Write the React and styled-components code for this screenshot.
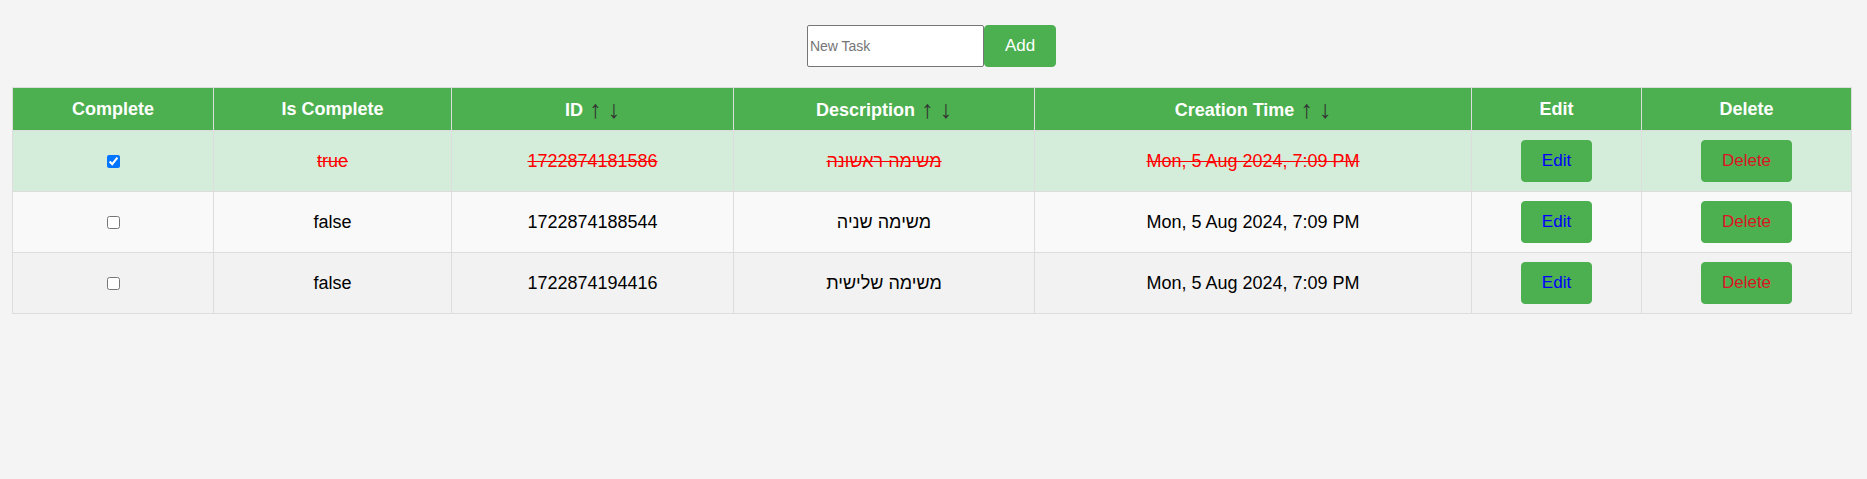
import styled, { createGlobalStyle } from "styled-components";

const tasks = [
    {id: 1722874181586, description: 'משימה ראשונה', time: 'Mon, 5 Aug 2024, 7:09 PM', complete: true},
    {id: 1722874188544, description: 'משימה שניה', time: 'Mon, 5 Aug 2024, 7:09 PM', complete: false},
    {id: 1722874194416, description: 'משימה שלישית', time: 'Mon, 5 Aug 2024, 7:09 PM', complete: false}
];

const columns = [
    {label: 'Complete', width: 201},
    {label: 'Is Complete', width: 238},
    {label: 'ID', width: 282, sort: true},
    {label: 'Description', width: 301, sort: true},
    {label: 'Creation Time', width: 437, sort: true},
    {label: 'Edit', width: 170},
    {label: 'Delete', width: 210}
];

const GlobalStyle = createGlobalStyle`
  body {
    margin: 0;
    background: #f4f4f4;
    font-family: "Liberation Sans", Arial, sans-serif;
  }
`;

const App = () => {
    return (
        <Page>
            <GlobalStyle/>
            <AddForm>
                <TaskInput placeholder="New Task"/>
                <GreenButton>Add</GreenButton>
            </AddForm>
            <StyledTable>
                <colgroup>
                    {columns.map(col => <col key={col.label} style={{width: col.width}}/>)}
                </colgroup>
                <thead>
                <tr>
                    {columns.map(col =>
                        <th key={col.label}>
                            {col.label}
                            {col.sort && <>
                                <SortButton>↑</SortButton>
                                <SortButton>↓</SortButton>
                            </>}
                        </th>)}
                </tr>
                </thead>
                <tbody>
                {tasks.map((task, index) => (
                    <Row key={task.id} $complete={task.complete} $even={index % 2 === 1}>
                        <td><input type="checkbox" defaultChecked={task.complete}/></td>
                        <td>{String(task.complete)}</td>
                        <td>{task.id}</td>
                        <td dir="rtl">{task.description}</td>
                        <td>{task.time}</td>
                        <td><GreenButton $color="#0000ff">Edit</GreenButton></td>
                        <td><GreenButton $color="#dc1426">Delete</GreenButton></td>
                    </Row>
                ))}
                </tbody>
            </StyledTable>
        </Page>
    );
};

const Page = styled.div`
  padding: 25px 16px 0 12px;
`

const AddForm = styled.div`
  display: flex;
  justify-content: center;
  margin-bottom: 20px;
`

const TaskInput = styled.input`
  box-sizing: border-box;
  width: 177px;
  height: 42px;
  padding: 0 2px;
  border: 1px solid #767676;
  border-radius: 2px;
  font-family: "Liberation Sans", Arial, sans-serif;
  font-size: 14px;

  &::placeholder {
    color: #757575;
  }
`

const GreenButton = styled.button`
  box-sizing: border-box;
  height: 42px;
  padding: 0 20px;
  border: 1px solid #4caf50;
  border-radius: 4px;
  background-color: #4caf50;
  color: ${props => props.$color || '#ffffff'};
  font-family: "Liberation Sans", Arial, sans-serif;
  font-size: 17px;
  cursor: pointer;
`

const SortButton = styled.button`
  background: none;
  border: none;
  padding: 0 0 0 6px;
  color: #333333;
  font-family: "Liberation Sans", Arial, sans-serif;
  font-size: 25px;
  font-weight: 400;
  line-height: 1;
  vertical-align: -2px;
`

const Row = styled.tr`
  background-color: ${props => props.$complete ? '#d4edda' : props.$even ? '#f9f9f9' : '#f2f2f2'};

  td {
    color: ${props => props.$complete ? '#ff0000' : '#000000'};
    text-decoration: ${props => props.$complete ? 'line-through' : 'none'};
  }
`

const StyledTable = styled.table`
  width: 100%;
  table-layout: fixed;
  border-collapse: collapse;
  font-size: 18px;

  th, td {
    border: 1px solid #dddddd;
    text-align: center;
    vertical-align: middle;
  }

  th {
    height: 42px;
    padding: 0 8px;
    background-color: #4caf50;
    color: #ffffff;
    font-weight: 700;
  }

  td {
    height: 60px;
    padding: 0 8px;
  }

  input[type="checkbox"] {
    margin: 0;
    vertical-align: middle;
  }
`

export default App;
